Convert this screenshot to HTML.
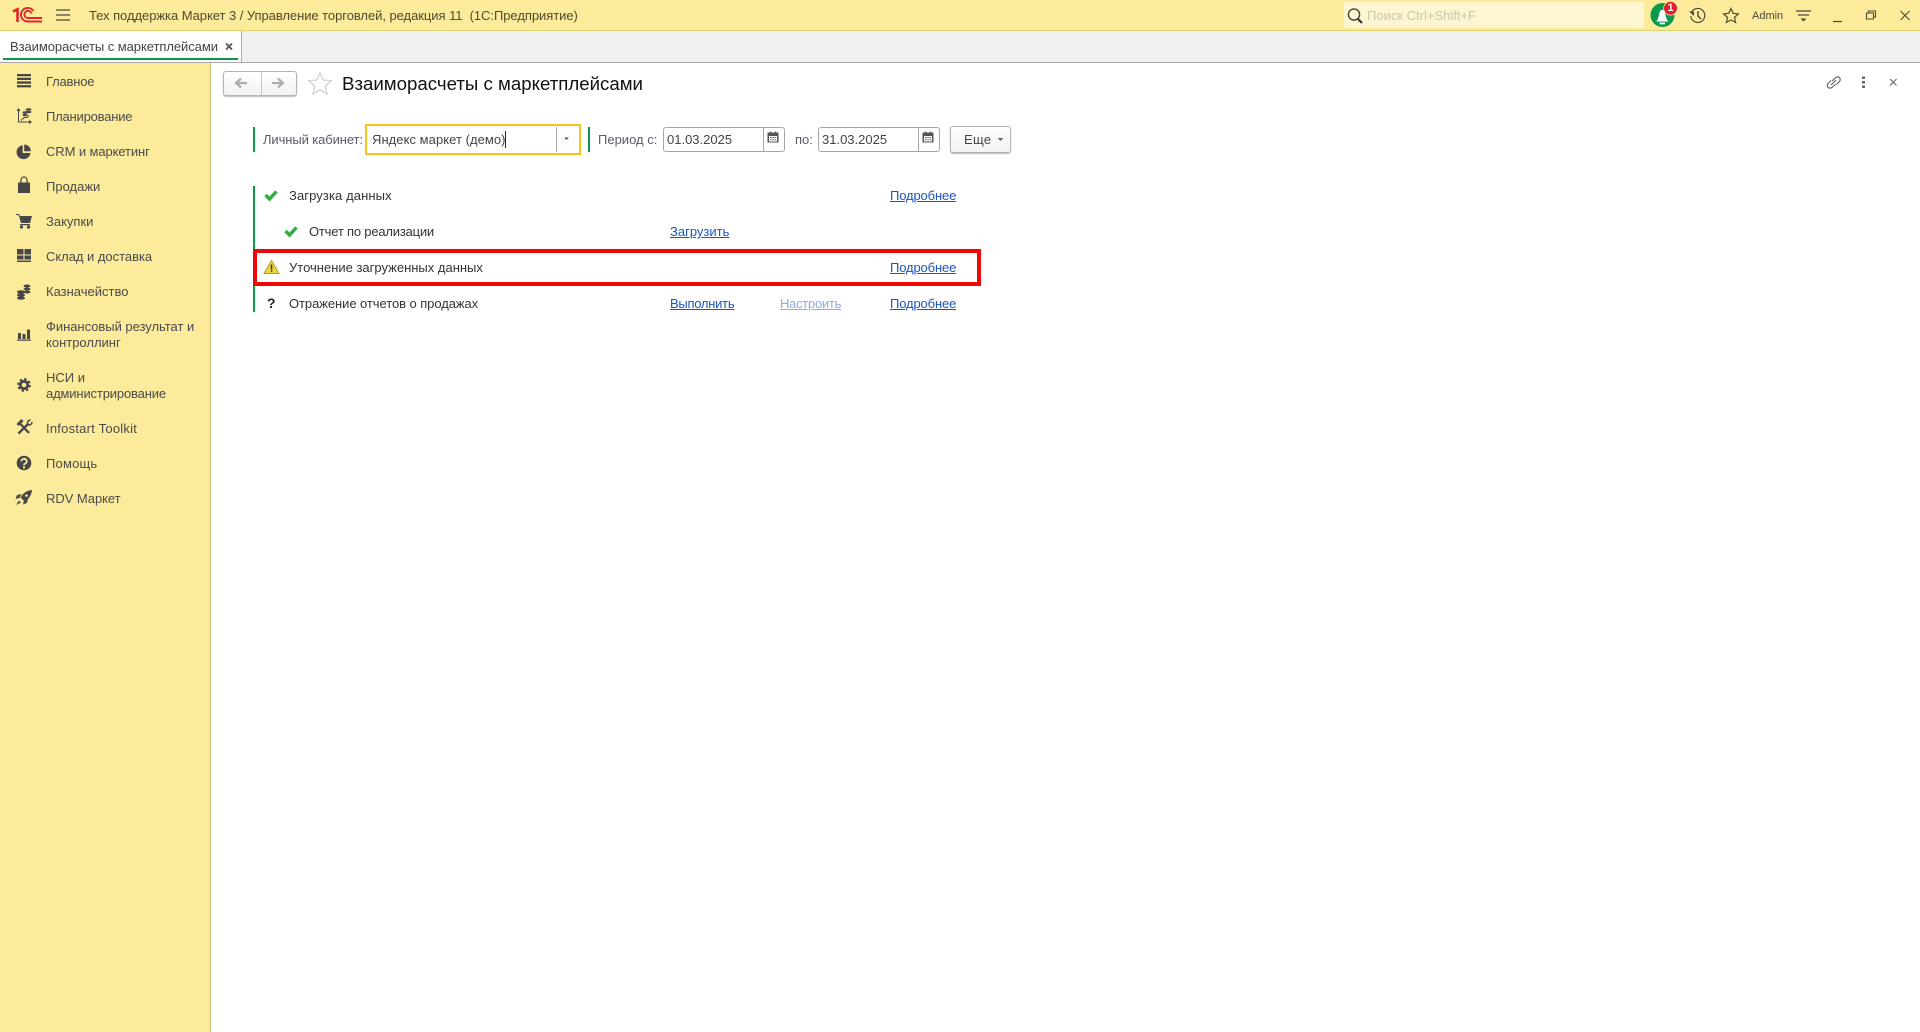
<!DOCTYPE html>
<html lang="ru"><head><meta charset="utf-8"><title>Взаиморасчеты с маркетплейсами</title>
<style>
html,body{margin:0;padding:0;width:1920px;height:1032px;overflow:hidden;background:#fff}
body{position:relative;font-family:"Liberation Sans",Arial,sans-serif;font-size:13px;color:#4b4b4b}
.a{position:absolute}
.t{position:absolute;white-space:pre;line-height:16px;height:16px}
.s{color:#4a4a4a;left:46px}
.d{color:#333}
.l{color:#1b55c0;text-decoration:underline}
.f{color:#5a5a6a}
.box{position:absolute;box-sizing:border-box;background:#fff;border:1px solid #a6a6a6;border-radius:3px}
svg{position:absolute;left:0;top:0}
</style></head><body>
<div class="a" style="left:0;top:0;width:1920px;height:30px;background:#fbeb9b"></div>
<div class="a" style="left:0;top:30px;width:1920px;height:1px;background:#e2d272"></div>
<div class="a" style="left:0;top:31px;width:1920px;height:31px;background:#f0f0f0"></div>
<div class="a" style="left:0;top:62px;width:1920px;height:1px;background:#a8a8a8"></div>
<div class="a" style="left:0;top:31px;width:241px;height:31px;background:#fff;border-right:1px solid #a8a8a8"></div>
<div class="a" style="left:3px;top:58px;width:235px;height:2px;background:#0b9a4c"></div>
<div class="a" style="left:0;top:63px;width:210px;height:969px;background:#fbeb9b;border-right:1px solid #c9bb72"></div>
<div class="a" style="left:1344px;top:2px;width:300px;height:26px;background:#fdf6d0;border-radius:2px"></div>

<div class="t" style="left:89px;top:8px;color:#4f4a2e;letter-spacing:-.05px">Тех поддержка Маркет 3 / Управление торговлей, редакция 11  (1С:Предприятие)</div>
<div class="t" style="left:10px;top:39px;color:#444;letter-spacing:-.06px">Взаиморасчеты с маркетплейсами</div>
<div class="t" style="left:1367px;top:8px;color:#c9c6b4">Поиск Ctrl+Shift+F</div>
<div class="t" style="left:1752px;top:8px;color:#4a4a3a;font-size:11px">Admin</div>

<div class="t s" style="top:74px;letter-spacing:-.2px">Главное</div>
<div class="t s" style="top:109px;letter-spacing:-.2px">Планирование</div>
<div class="t s" style="top:144px;letter-spacing:-.1px">CRM и маркетинг</div>
<div class="t s" style="top:179px">Продажи</div>
<div class="t s" style="top:214px">Закупки</div>
<div class="t s" style="top:249px;letter-spacing:-.03px">Склад и доставка</div>
<div class="t s" style="top:284px">Казначейство</div>
<div class="t s" style="top:319px;letter-spacing:-.03px">Финансовый результат и</div>
<div class="t s" style="top:335px">контроллинг</div>
<div class="t s" style="top:370px">НСИ и</div>
<div class="t s" style="top:386px;letter-spacing:-.15px">администрирование</div>
<div class="t s" style="top:421px;letter-spacing:.23px">Infostart Toolkit</div>
<div class="t s" style="top:456px;letter-spacing:.2px">Помощь</div>
<div class="t s" style="top:491px;letter-spacing:-.05px">RDV Маркет</div>

<div class="a" style="left:223px;top:71px;width:72px;height:23px;border:1px solid #b4b4b4;border-radius:3px;background:linear-gradient(#fff,#f2f2f2);box-shadow:0 1px 1px #bbb"></div>
<div class="a" style="left:261px;top:72px;width:1px;height:23px;background:#c4c4c4"></div>
<div class="t" style="left:342px;top:72px;line-height:24px;height:24px;font-size:18.67px;color:#111">Взаиморасчеты с маркетплейсами</div>

<div class="a" style="left:253px;top:127px;width:2px;height:25px;background:#0b9a4c"></div>
<div class="t f" style="left:263px;top:132px;letter-spacing:-.1px">Личный кабинет:</div>
<div class="a" style="left:365px;top:124px;width:216px;height:31px;box-sizing:border-box;background:#fff;border:2px solid #fbc21a"></div>
<div class="t" style="left:372px;top:132px;color:#444;letter-spacing:.05px">Яндекс маркет (демо)</div>
<div class="a" style="left:505px;top:131px;width:1px;height:17px;background:#222"></div>
<div class="a" style="left:556px;top:127px;width:1px;height:25px;background:#a6a6a6"></div>
<div class="a" style="left:588px;top:127px;width:2px;height:25px;background:#0b9a4c"></div>
<div class="t f" style="left:598px;top:132px">Период с:</div>
<div class="box" style="left:663px;top:127px;width:122px;height:25px"></div>
<div class="a" style="left:763px;top:128px;width:1px;height:23px;background:#a6a6a6"></div>
<div class="t" style="left:667px;top:132px;color:#444">01.03.2025</div>
<div class="t f" style="left:795px;top:132px">по:</div>
<div class="box" style="left:818px;top:127px;width:122px;height:25px"></div>
<div class="a" style="left:918px;top:128px;width:1px;height:23px;background:#a6a6a6"></div>
<div class="t" style="left:822px;top:132px;color:#444">31.03.2025</div>
<div class="a" style="left:950px;top:126px;width:59px;height:25px;border:1px solid #b4b4b4;border-radius:3px;background:linear-gradient(#fff,#f2f2f2);box-shadow:0 1px 1px #bbb"></div>
<div class="t" style="left:964px;top:132px;color:#444;letter-spacing:.3px">Еще</div>

<div class="a" style="left:253px;top:186px;width:2px;height:126px;background:#0b9a4c"></div>
<div class="a" style="left:253px;top:249px;width:728px;height:37px;box-sizing:border-box;background:#fff;border:4.5px solid #ee0707"></div>
<div class="t d" style="left:289px;top:188px;letter-spacing:.1px">Загрузка данных</div>
<div class="t d" style="left:309px;top:224px;letter-spacing:-.2px">Отчет по реализации</div>
<div class="t d" style="left:289px;top:260px">Уточнение загруженных данных</div>
<div class="t d" style="left:289px;top:296px;letter-spacing:-.07px">Отражение отчетов о продажах</div>
<div class="t l" style="left:890px;top:188px;letter-spacing:-.14px">Подробнее</div>
<div class="t l" style="left:670px;top:224px">Загрузить</div>
<div class="t l" style="left:890px;top:260px;letter-spacing:-.14px">Подробнее</div>
<div class="t l" style="left:670px;top:296px;letter-spacing:-.27px">Выполнить</div>
<div class="t l" style="left:780px;top:296px;color:#8fabe0;letter-spacing:-.27px">Настроить</div>
<div class="t l" style="left:890px;top:296px;letter-spacing:-.14px">Подробнее</div>
<div class="t" style="left:267px;top:295px;color:#222;font-weight:bold;font-size:14px">?</div>

<svg width="1920" height="1032" viewBox="0 0 1920 1032">
<!-- 1C logo -->
<g fill="none" stroke="#e4262c">
<path d="M13 11.500l4.500-2.200V22" stroke-width="2.600"/>
<path d="M33.500 11A6.800 6.800 0 1 0 27.500 21.500H42" stroke-width="1.900"/>
<path d="M31.500 13.500A3.600 3.600 0 1 0 28 18H42" stroke-width="1.900"/>
</g>
<!-- hamburger -->
<path d="M56 10h14M56 15h14M56 20h14" stroke="#4a4a3a" stroke-width="1.200"/>
<!-- tab close -->
<path d="M226 43.500l6 6M232 43.500l-6 6" stroke="#555" stroke-width="1.800"/>
<!-- search -->
<circle cx="1354" cy="14.500" r="5.600" fill="none" stroke="#444" stroke-width="1.400"/>
<path d="M1358 19l4 4" stroke="#333" stroke-width="2.200"/>
<!-- bell -->
<circle cx="1662.500" cy="15" r="12" fill="#0b9a4c"/>
<path d="M1656 21.500c2.500-2 2.500-5 3.500-9 .8-3.500 4.500-3.500 5.500 0 1 4 1 7 3.500 9z" fill="#fff"/>
<path d="M1659.500 22.500h5.500v1.800h-5.500z" fill="#fff"/>
<circle cx="1670.500" cy="8.300" r="7.200" fill="#fdf0b0"/>
<circle cx="1670.500" cy="8.300" r="6.500" fill="#e5202a"/>
<!-- history -->
<path d="M1692 11.500A7 7 0 1 1 1690.800 16" fill="none" stroke="#4a4a3a" stroke-width="1.200"/>
<path d="M1698 11v5l3 3" fill="none" stroke="#4a4a3a" stroke-width="1.400"/>
<path d="M1689 11.500h5v4.500z" fill="#4a4a3a"/>
<!-- top star -->
<path d="M1731 8.500l2.200 4.800 5.200.6-3.900 3.500 1.100 5.100-4.600-2.600-4.600 2.600 1.100-5.100-3.900-3.500 5.200-.6z" fill="none" stroke="#4a4a3a" stroke-width="1.200"/>
<!-- func menu -->
<path d="M1796 11h15M1798 15h11" stroke="#4a4a3a" stroke-width="1.200"/>
<path d="M1800.500 18.500h6l-3 3z" fill="#4a4a3a"/>
<!-- window controls -->
<path d="M1833 21.500h9" stroke="#4a4a3a" stroke-width="1.200"/>
<path d="M1866.500 13h7v6h-7zM1868.500 13v-2h7v6h-2" fill="none" stroke="#4a4a3a" stroke-width="1.100"/>
<path d="M1900.500 11l9 9M1909.500 11l-9 9" stroke="#4a4a3a" stroke-width="1.100"/>
<!-- content top right -->
<g fill="none" stroke="#666" stroke-width="1.200">
<path d="M1832 81l3-3c2-2 4.500-1 5 .5s0 2.500-1 3.500l-2.500 2.500"/>
<path d="M1835.500 84l-3 3c-2 2-4.500 1-5-.5s0-2.500 1-3.500l2.500-2.500"/>
<path d="M1831 85l5-5"/>
</g>
<g fill="#666"><rect x="1862" y="76.500" width="3" height="2.500"/><rect x="1862" y="81" width="3" height="2.500"/><rect x="1862" y="85.500" width="3" height="2.500"/></g>
<path d="M1890 79l6.500 6.500M1896.500 79l-6.500 6.500" stroke="#666" stroke-width="1.100"/>
<!-- nav arrows -->
<path d="M236 83h11M241 78.500l-5 4.500 5 4.500" fill="none" stroke="#adadad" stroke-width="2.200"/>
<path d="M283 83h-11M278 78.500l5 4.500-5 4.500" fill="none" stroke="#adadad" stroke-width="2.200"/>
<!-- title star -->
<path d="M320 72.500l3.200 7.500 8 .7-6.100 5.300 1.900 7.900-7-4.200-7 4.200 1.900-7.900-6.100-5.300 8-.7z" fill="#fff" stroke="#cfcfcf" stroke-width="1.200"/>
<!-- dropdown carets -->
<path d="M564 137.500h5l-2.500 2.500z" fill="#555"/>
<path d="M997.500 138h6l-3 3z" fill="#666"/>
<!-- calendars -->
<g fill="#555" transform="translate(-2 -.5)">
<path d="M769.500 133h11v10h-11zM771 136.500v5.500h8v-5.500z" fill-rule="evenodd"/>
<path d="M772 135h1.200v-3H772zM777 135h1.200v-3H777zM772 137.500h1.500v1H772zM774.300 137.500h1.500v1h-1.500zM776.600 137.500h1.500v1h-1.500zM772 139.800h1.500v1H772zM774.300 139.800h1.500v1h-1.500zM776.600 139.800h1.500v1h-1.500z"/>
<path d="M924.500 133h11v10h-11zM926 136.500v5.500h8v-5.500z" fill-rule="evenodd"/>
<path d="M927 135h1.200v-3H927zM932 135h1.200v-3H932zM927 137.500h1.500v1H927zM929.300 137.500h1.500v1h-1.500zM931.600 137.500h1.500v1h-1.500zM927 139.800h1.500v1H927zM929.300 139.800h1.500v1h-1.500zM931.600 139.800h1.500v1h-1.500z"/>
</g>
<!-- checks -->
<path d="M265.500 195l4 4 7-7.500" fill="none" stroke="#2fb03a" stroke-width="3.400"/>
<path d="M285.500 231l4 4 7-7.500" fill="none" stroke="#2fb03a" stroke-width="3.400"/>
<!-- warning -->
<path d="M271.500 260.500l7.500 13h-15z" fill="#f0d63a" stroke="#b3a02c" stroke-width="1"/>
<path d="M270.800 264.500h1.500v5h-1.500zM270.800 270.300h1.500v1.500h-1.500z" fill="#333"/>
<!-- sidebar icons -->
<g fill="#474747">
<!-- main -->
<path d="M17 74h14v2.300H17zM17 77.700h14V80H17zM17 81.400h14v2.300H17zM17 85.100h14v2.300H17z"/>
<!-- planning -->
<path d="M18 110v12.500h13v-1H19V110z"/>
<path d="M18.500 108l2 3h-4zM32 122l-3 2v-4z"/>
<path d="M21 120.500l3-3 h3 l2-2" fill="none" stroke="#474747" stroke-width="1"/>
<ellipse cx="28.500" cy="109.500" rx="3" ry="1.300"/><ellipse cx="28.500" cy="112" rx="3" ry="1.300"/><ellipse cx="25" cy="112.500" rx="2.500" ry="1.200"/><ellipse cx="25" cy="115" rx="2.500" ry="1.200"/>
<!-- crm -->
<path d="M22.700 145.200a7 7 0 1 0 7.800 7.800h-7.800z"/>
<path d="M24.200 144.500a6.600 6.600 0 0 1 6.600 6.800h-6.600z"/>
<!-- sales -->
<path d="M18 182.500h12v10.500H18z"/>
<path d="M21 183v-3a3 3 0 0 1 6 0v3" fill="none" stroke="#474747" stroke-width="1.200"/>
<!-- cart -->
<path d="M16 214h3l1 2h12l-2 7H21l-2-7-1-1h-2z"/>
<circle cx="21.500" cy="227" r="1.600"/><circle cx="28.500" cy="227" r="1.600"/>
<path d="M20 224h10v1.200H20z"/>
<!-- warehouse -->
<path d="M17 249h6.500v5.500H17zM24.500 249H31v5.500h-6.500zM17 255.500h6.500v4H17zM24.500 255.500H31v4h-6.500zM17 260.500h14v1.500H17z"/>
<!-- treasury -->
<ellipse cx="27" cy="286" rx="3.500" ry="1.500"/><ellipse cx="27" cy="289" rx="3.500" ry="1.500"/><ellipse cx="27" cy="292" rx="3.500" ry="1.500"/>
<ellipse cx="21" cy="292" rx="4" ry="1.800"/><ellipse cx="21" cy="295" rx="4" ry="1.800"/><ellipse cx="21" cy="298" rx="4" ry="1.800"/>
<!-- finance -->
<path d="M18 333h3v6h-3zM22.500 334h3v5h-3zM27 329.500h3v9.500h-3zM17 339.500h14v1.300H17z"/>
<!-- gear -->
<circle cx="24" cy="385" r="3.700" fill="none" stroke="#474747" stroke-width="2.800"/>
<circle cx="24" cy="385" r="5.900" fill="none" stroke="#474747" stroke-width="1.900" stroke-dasharray="2.400 2.230"/>
<!-- tools -->
<g fill="none" stroke="#474747">
<path d="M18.500 433.500l10-10" stroke-width="2.300"/>
<path d="M29 433l-8.500-9" stroke-width="2.300"/>
<path d="M17.500 425l5-5" stroke-width="3"/>
<path d="M27.500 423.500a3 3 0 0 1 3-3.500M28.500 425a3 3 0 0 0 3.500-3" stroke-width="1.500"/>
</g>
<!-- help -->
<circle cx="24" cy="463" r="7.300"/>
<path d="M21.300 461.300a2.700 2.500 0 1 1 4 2.200c-.9.500-1.300.9-1.300 1.900" fill="none" stroke="#fbeb9b" stroke-width="1.800"/>
<path d="M23 466.500h2v2h-2z" fill="#fbeb9b"/>
<!-- rocket -->
<path d="M32 490C27 490.500 23 493 20.500 497.500L24.500 501.500C29 499 31.500 495 32 490z"/>
<path d="M21.500 494L17 495 15.500 499 19.500 498zM28 498.500L27 503 23 504.500 24 500.500zM19 500.500L16 505 21 502.500z"/>
<circle cx="26.500" cy="495.500" r="1.300" fill="#fbeb9b"/>
</g>
</svg>
<div class="t" style="left:1667.500px;top:1px;color:#fff;font-weight:bold;font-size:11px;line-height:14px;height:14px">1</div>
</body></html>
